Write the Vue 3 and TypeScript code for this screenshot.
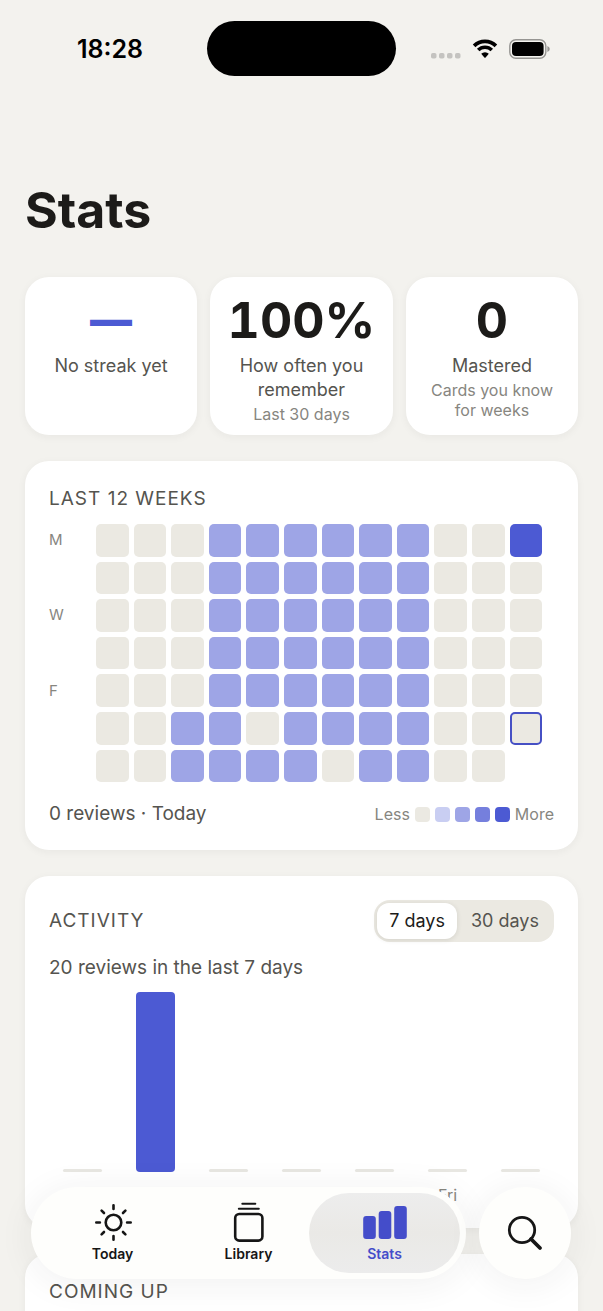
<script setup lang="ts">
import { computed, ref } from 'vue'

interface StatCard {
  value: string
  label: string
  note?: string
  accent?: boolean
  wide?: boolean
}

interface Day {
  name: string
  count: number
}

const stats: StatCard[] = [
  { value: '—', label: 'No streak yet', accent: true },
  { value: '100%', label: 'How often you remember', note: 'Last 30 days', wide: true },
  { value: '0', label: 'Mastered', note: 'Cards you know for weeks' },
]

// One row per weekday, one mark per week: 0 is idle, 4 is the busiest level,
// t is the current day and - is a day still to come.
const weeks: string[] = [
  '000222222004',
  '000222222000',
  '000222222000',
  '000222222000',
  '000222222000',
  '00220222200t',
  '00222202200-',
]
const weekdayLabels: string[] = ['M', '', 'W', '', 'F', '', '']

const cellClass = (mark: string): string => {
  if (mark === '-') return 'blank'
  if (mark === 't') return 'level-0 today'
  return `level-${mark}`
}

const range = ref<7 | 30>(7)
// Every second column carries its name.
const days: Day[] = [
  { name: '', count: 0 },
  { name: 'Mon', count: 20 },
  { name: '', count: 0 },
  { name: 'Wed', count: 0 },
  { name: '', count: 0 },
  { name: 'Fri', count: 0 },
  { name: '', count: 0 },
]
const total = computed(() => days.reduce((sum, d) => sum + d.count, 0))
const peak = computed(() => Math.max(...days.map((d) => d.count), 1))
</script>

<template>
  <div class="screen">
    <div class="scroller">
      <header class="status">
        <div class="status-side"><span class="clock">18:28</span></div>
        <div class="island"></div>
        <div class="status-side icons">
          <svg class="dots" width="30" height="6" viewBox="0 0 30 6" aria-hidden="true">
            <rect v-for="n in 4" :key="n" :x="(n - 1) * 8" y="0" width="5.5" height="5.5" rx="1.8" fill="#c4c3c0" />
          </svg>
          <svg width="26" height="20" viewBox="0 0 26 20" aria-hidden="true">
            <path d="M2.1 6.9 A15.5 15.5 0 0 1 23.9 6.9" fill="none" stroke="#000" stroke-width="3.7" />
            <path d="M6.2 11.1 A9.6 9.6 0 0 1 19.8 11.1" fill="none" stroke="#000" stroke-width="3.5" />
            <path d="M9.2 14.8 A5.4 5.4 0 0 1 16.8 14.8 L13.6 18.5 Q13 19.1 12.4 18.5 Z" fill="#000" />
          </svg>
          <svg width="42" height="20" viewBox="0 0 42 20" aria-hidden="true">
            <rect x="0.8" y="0.8" width="36" height="18.4" rx="6" fill="none" stroke="#969592" stroke-width="1.4" />
            <rect x="3" y="3" width="31.6" height="14" rx="4" fill="#000" />
            <path d="M38.4 7 Q40.8 7.8 40.8 10 Q40.8 12.2 38.4 13 Z" fill="#969592" />
          </svg>
        </div>
      </header>

      <main>
        <h1>Stats</h1>

        <section class="stats">
          <article v-for="s in stats" :key="s.label" class="card stat" :class="{ wide: s.wide }">
            <div class="value" :class="{ accent: s.accent }">{{ s.value }}</div>
            <div class="label">{{ s.label }}</div>
            <div v-if="s.note" class="note">{{ s.note }}</div>
          </article>
        </section>

        <section class="card panel">
          <h2>LAST 12 WEEKS</h2>
          <div class="heatmap">
            <template v-for="(row, r) in weeks" :key="r">
              <span class="weekday">{{ weekdayLabels[r] }}</span>
              <span v-for="(mark, c) in row.split('')" :key="c" class="cell" :class="cellClass(mark)"></span>
            </template>
          </div>
          <div class="heat-footer">
            <span class="body-text">0 reviews · Today</span>
            <span class="legend">
              <span>Less</span>
              <i v-for="n in 5" :key="n" class="swatch" :class="`level-${n - 1}`"></i>
              <span>More</span>
            </span>
          </div>
        </section>

        <section class="card panel">
          <div class="activity-head">
            <h2>ACTIVITY</h2>
            <div class="segment">
              <button type="button" :class="{ on: range === 7 }" :aria-pressed="range === 7" @click="range = 7">7 days</button>
              <button type="button" :class="{ on: range === 30 }" :aria-pressed="range === 30" @click="range = 30">30 days</button>
            </div>
          </div>
          <p class="body-text summary">{{ total }} reviews in the last 7 days</p>
          <div class="chart">
            <div v-for="(d, i) in days" :key="i" class="day">
              <div class="track">
                <div class="bar" :class="{ empty: !d.count }" :style="{ height: `${(d.count / peak) * 100}%` }"></div>
              </div>
              <span class="day-name">{{ d.name }}</span>
            </div>
          </div>
        </section>

        <section class="card panel">
          <h2>COMING UP</h2>
          <div class="upcoming"></div>
        </section>
      </main>
    </div>

    <div class="dock">
      <nav class="tabs">
        <a href="#today" class="tab">
          <svg width="40" height="40" viewBox="0 0 40 40" aria-hidden="true">
            <g fill="none" stroke="#161616" stroke-width="2.6" stroke-linecap="round">
              <circle cx="20.5" cy="20.5" r="7.8" />
              <path d="M20.5 3.3v3.6M20.5 34.1v3.6M3.3 20.5h3.6M34.1 20.5h3.6M8.6 8.6l2.4 2.4M30 30l2.4 2.4M8.6 32.4l2.4-2.4M30 11l2.4-2.4" />
            </g>
          </svg>
          <span>Today</span>
        </a>
        <a href="#library" class="tab">
          <svg width="40" height="40" viewBox="0 0 40 40" aria-hidden="true">
            <g fill="none" stroke="#161616" stroke-linecap="round">
              <rect x="6.2" y="12" width="27.2" height="26.6" rx="4" stroke-width="2.6" />
              <path d="M9.8 6.8h20" stroke-width="2" />
              <path d="M13.3 1.8h13" stroke-width="2" />
            </g>
          </svg>
          <span>Library</span>
        </a>
        <a href="#stats" class="tab current" aria-current="page">
          <svg width="46" height="40" viewBox="0 0 46 40" aria-hidden="true">
            <g fill="#444dca">
              <rect x="1.2" y="14" width="12.6" height="23" rx="3" />
              <rect x="16.7" y="9" width="12.6" height="28" rx="3" />
              <rect x="32.2" y="4" width="12.6" height="33" rx="3" />
            </g>
          </svg>
          <span>Stats</span>
        </a>
      </nav>
      <button type="button" class="search" aria-label="Search">
        <svg width="36" height="36" viewBox="0 0 36 36" aria-hidden="true">
          <circle cx="15" cy="15" r="12.7" fill="none" stroke="#161616" stroke-width="2.8" />
          <path d="M24 24 L33 33" fill="none" stroke="#161616" stroke-width="3.8" stroke-linecap="round" />
        </svg>
      </button>
    </div>
  </div>
</template>

<style>
body {
  margin: 0;
  background: #f3f2ee;
}
</style>

<style scoped>
.screen {
  position: relative;
  height: 100vh;
  overflow: hidden;
  background: #f3f2ee;
  color: #1c1b19;
  font-family: Inter, "Liberation Sans", sans-serif;
}
.scroller {
  height: 100%;
  overflow-y: auto;
  scrollbar-width: none;
}
.status {
  display: grid;
  grid-template-columns: minmax(0, 1fr) 189px minmax(0, 1fr);
  align-items: center;
  padding-top: 21px;
}
.status-side {
  display: flex;
  align-items: center;
}
.clock {
  padding-left: 77px;
  color: #000;
  font-size: 25px;
  line-height: 32px;
  font-weight: 600;
}
.island {
  height: 55px;
  border-radius: 28px;
  background: #000;
}
.icons {
  justify-content: flex-end;
  gap: 11px;
  padding-right: 52px;
}
.icons .dots {
  align-self: flex-end;
}
.icons svg {
  flex: none;
}
main {
  display: flex;
  flex-direction: column;
  gap: 26px;
  padding: 103px 25px 120px;
}
h1 {
  margin: 0 0 10px;
  font-size: 50px;
  line-height: 62px;
  font-weight: 700;
}
h2 {
  margin: 0;
  color: #55544f;
  font-size: 19px;
  line-height: 28px;
  font-weight: 400;
  letter-spacing: 1px;
}
.card {
  border-radius: 24px;
  background: #fff;
  box-shadow: 0 2px 8px rgba(40, 38, 30, 0.05);
}
.stats {
  display: grid;
  grid-template-columns: 172fr 183fr 172fr;
  gap: 13px;
}
.stat {
  padding: 13px 18px 11px;
  text-align: center;
}
.value {
  margin: 0 -12px;
  font-size: 50px;
  line-height: 60px;
  font-weight: 700;
  font-variant-numeric: tabular-nums;
  white-space: nowrap;
}
.value.accent {
  color: #4c5ad3;
  font-size: 42px;
  font-weight: 900;
}
.label {
  margin: 4px -8px 0;
  color: #55544f;
  font-size: 18px;
  line-height: 24px;
}
.wide .label {
  margin: 4px 0 0;
}
.note {
  margin-top: 2px;
  color: #87867f;
  font-size: 16px;
  line-height: 20px;
}
.panel {
  padding: 24px 24px 22px;
}
.heatmap {
  display: grid;
  grid-template-columns: 42px repeat(12, 1fr);
  gap: 5px;
  margin: 11px 12px 18px 0;
}
.weekday {
  align-self: center;
  color: #87867f;
  font-size: 15px;
  line-height: 20px;
}
.cell {
  box-sizing: border-box;
  aspect-ratio: 1;
  border-radius: 5px;
}
.level-0 {
  background: #ebe9e2;
}
.level-1 {
  background: #c9cef2;
}
.level-2 {
  background: #9ea5e6;
}
.level-3 {
  background: #757fdd;
}
.level-4 {
  background: #4c5ad3;
}
.today {
  border: 2px solid #4650c4;
}
.heat-footer {
  display: flex;
  align-items: center;
  justify-content: space-between;
}
.body-text {
  margin: 0;
  color: #55544f;
  font-size: 19px;
  line-height: 28px;
}
.legend {
  display: flex;
  align-items: center;
  gap: 5px;
  color: #87867f;
  font-size: 16px;
  line-height: 20px;
}
.swatch {
  width: 15px;
  height: 15px;
  border-radius: 4px;
}
.activity-head {
  display: flex;
  align-items: center;
  justify-content: space-between;
}
.segment {
  display: flex;
  gap: 2px;
  padding: 3px;
  border-radius: 16px;
  background: #ebe9e2;
}
.segment button {
  height: 36px;
  padding: 0 12px;
  border: 0;
  border-radius: 12px;
  background: transparent;
  color: #55544f;
  font-family: inherit;
  font-size: 18px;
  line-height: 24px;
}
.segment .on {
  background: #fff;
  color: #1c1b19;
  box-shadow: 0 1px 5px rgba(40, 38, 30, 0.12);
}
.summary {
  margin-top: 12px;
}
.chart {
  display: flex;
  gap: 34px;
  margin-top: 10px;
  padding: 0 14px;
}
.day {
  flex: 1 1 0;
  min-width: 0;
  display: flex;
  flex-direction: column;
  align-items: center;
  gap: 12px;
}
.track {
  display: flex;
  align-items: flex-end;
  width: 100%;
  height: 180px;
}
.bar {
  width: 100%;
  min-height: 3px;
  border-radius: 4px;
  background: #4c5ad3;
}
.bar.empty {
  border-radius: 2px;
  background: #e8e7e2;
}
.day-name {
  min-height: 22px;
  color: #87867f;
  font-size: 16px;
  line-height: 22px;
}
.upcoming {
  height: 160px;
}
.dock {
  position: absolute;
  right: 32px;
  bottom: 32px;
  left: 31px;
  display: flex;
  gap: 13px;
}
.tabs {
  flex: 1;
  display: flex;
  box-sizing: border-box;
  height: 92px;
  padding: 6px;
  border-radius: 46px;
  background: #fefefc;
  box-shadow: 0 4px 36px rgba(40, 40, 40, 0.07);
}
.tab {
  flex: 1 1 0;
  display: flex;
  flex-direction: column;
  align-items: center;
  gap: 2px;
  padding-top: 9px;
  border-radius: 40px;
  color: #161616;
  font-size: 14px;
  line-height: 20px;
  font-weight: 600;
  text-decoration: none;
}
.tab + .tab {
  margin-left: -15px;
}
.tab.current {
  background: linear-gradient(#ededed, #eae9e6 50%, #ececec);
  color: #444dca;
}
.search {
  display: flex;
  align-items: center;
  justify-content: center;
  width: 92px;
  height: 92px;
  padding: 0;
  border: 0;
  border-radius: 46px;
  background: #fefefc;
  box-shadow: 0 4px 36px rgba(40, 40, 40, 0.07);
}
</style>
